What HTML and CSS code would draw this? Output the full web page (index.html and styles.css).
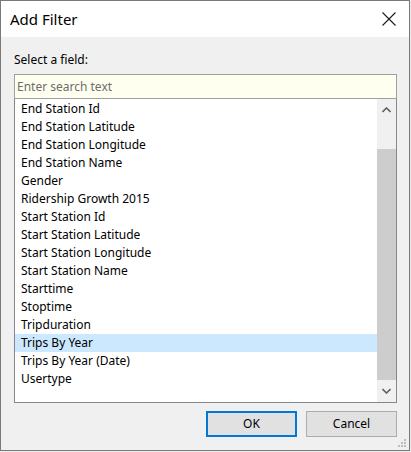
FILE: index.html
```html
<!DOCTYPE html>
<html>
<head>
<meta charset="utf-8">
<link rel="stylesheet" href="styles.css">
</head>
<body>
<div class="window">
  <div class="titlebar">
    <span class="title">Add Filter</span>
    <svg class="close" width="14" height="14" viewBox="0 0 14 14"><path d="M0.5 0.5 L13.5 13.5 M13.5 0.5 L0.5 13.5" stroke="#1a1a1a" stroke-width="1.1" fill="none"/></svg>
  </div>
  <div class="content">
    <div class="label">Select a field:</div>
    <div class="search">Enter search text</div>
    <div class="list">
      <div class="items">
        <div class="item">End Station Id</div>
        <div class="item">End Station Latitude</div>
        <div class="item">End Station Longitude</div>
        <div class="item">End Station Name</div>
        <div class="item">Gender</div>
        <div class="item">Ridership Growth 2015</div>
        <div class="item">Start Station Id</div>
        <div class="item">Start Station Latitude</div>
        <div class="item">Start Station Longitude</div>
        <div class="item">Start Station Name</div>
        <div class="item">Starttime</div>
        <div class="item">Stoptime</div>
        <div class="item">Tripduration</div>
        <div class="item selected">Trips By Year</div>
        <div class="item">Trips By Year (Date)</div>
        <div class="item">Usertype</div>
      </div>
      <div class="scrollbar">
        <div class="arrow"><svg width="9" height="6" viewBox="0 0 9 6"><path d="M0.5 5 L4.5 1 L8.5 5" stroke="#606060" stroke-width="1.6" fill="none"/></svg></div>
        <div class="track"><div class="thumb"></div></div>
        <div class="arrow"><svg width="9" height="6" viewBox="0 0 9 6"><path d="M0.5 1 L4.5 5 L8.5 1" stroke="#606060" stroke-width="1.6" fill="none"/></svg></div>
      </div>
    </div>
    <div class="buttons">
      <div class="btn default">OK</div>
      <div class="btn">Cancel</div>
    </div>
  </div>
  <svg class="grip" width="9" height="9" viewBox="0 0 9 9">
    <rect x="6" y="0" width="2" height="2" fill="#bcbcbc"/>
    <rect x="3" y="3" width="2" height="2" fill="#bcbcbc"/>
    <rect x="6" y="3" width="2" height="2" fill="#bcbcbc"/>
    <rect x="0" y="6" width="2" height="2" fill="#bcbcbc"/>
    <rect x="3" y="6" width="2" height="2" fill="#bcbcbc"/>
    <rect x="6" y="6" width="2" height="2" fill="#bcbcbc"/>
  </svg>
</div>
</body>
</html>
```

FILE: styles.css
```css
html, body {
  margin: 0;
  padding: 0;
}
body {
  background: #ececec;
  font-family: "Noto Sans", "Open Sans", sans-serif;
  font-size: 12px;
  color: #000;
}
.window {
  position: relative;
  width: 410px;
  height: 451px;
  box-sizing: border-box;
  border: 1px solid #7a7a7a;
  background: #f0f0f0;
  display: flex;
  flex-direction: column;
}
.titlebar {
  height: 36px;
  background: #fff;
  display: flex;
  align-items: center;
  justify-content: space-between;
  padding: 0 13px 0 9px;
  flex-shrink: 0;
}
.title {
  font-size: 15px;
  color: #000;
}
.close {
  display: block;
  margin-top: -1px;
}
.content {
  padding: 15px 12px 0 13px;
  display: flex;
  flex-direction: column;
}
.label {
  height: 16px;
  line-height: 16px;
  margin-bottom: 6px;
  color: #000;
}
.search {
  height: 23px;
  line-height: 23px;
  border: 1px solid #a0a0a0;
  background: #fffff0;
  color: #6d6d6d;
  padding-left: 2px;
}
.list {
  height: 303px;
  border: 1px solid #828790;
  border-top: none;
  background: #fff;
  display: flex;
}
.items {
  flex: 1;
  padding-top: 1px;
}
.item {
  height: 18px;
  line-height: 18px;
  padding-left: 6px;
  white-space: nowrap;
  color: #000;
}
.item.selected {
  background: #cce8ff;
}
.scrollbar {
  width: 19px;
  background: #f0f0f0;
  display: flex;
  flex-direction: column;
}
.arrow {
  height: 22px;
  display: flex;
  align-items: center;
  justify-content: center;
}
.track {
  flex: 1;
  display: flex;
  flex-direction: column;
  padding: 28px 0 0 0;
}
.thumb {
  flex: 1;
  background: #cdcdcd;
}
.buttons {
  display: flex;
  justify-content: flex-end;
  gap: 9px;
  margin-top: 8px;
}
.btn {
  width: 89px;
  height: 24px;
  line-height: 24px;
  text-align: center;
  background: #e1e1e1;
  border: 1px solid #adadad;
}
.btn.default {
  width: 87px;
  height: 22px;
  line-height: 22px;
  border: 2px solid #0078d7;
}
.grip {
  position: absolute;
  right: 2px;
  bottom: 2px;
}
```
